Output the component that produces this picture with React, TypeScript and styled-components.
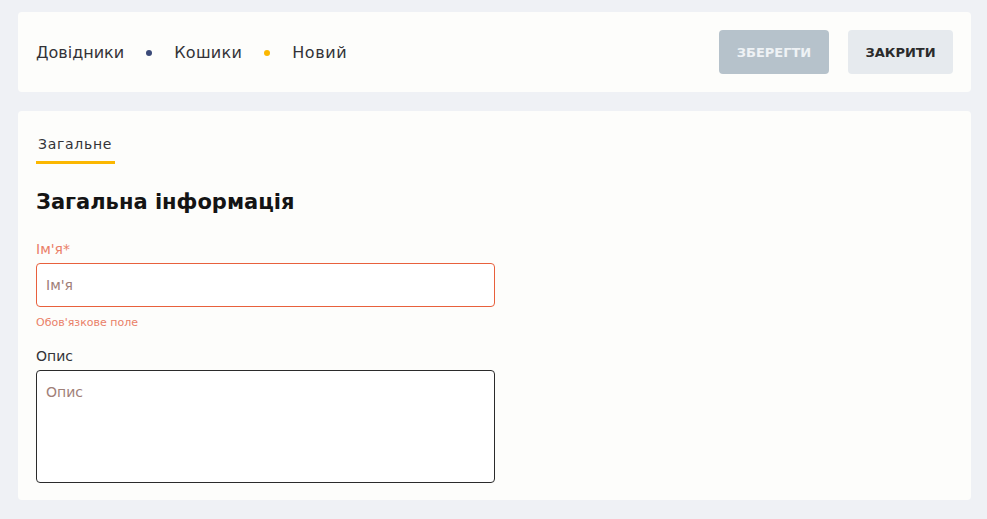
import React from "react";
import styled, { createGlobalStyle } from "styled-components";

const Global = createGlobalStyle`
  html, body { margin: 0; padding: 0; background: #eff1f5; }
  body { font-family: "DejaVu Sans", "Noto Sans", sans-serif; color: #2b2b2b; }
  * { box-sizing: border-box; }
`;

const Page = styled.div`
  display: flex;
  flex-direction: column;
  gap: 19px;
  padding: 12px 16px 18px 18px;
  width: 987px;
`;

const Card = styled.div`
  background: #fdfdfb;
  border-radius: 4px;
`;

const Header = styled(Card)`
  height: 80px;
  display: flex;
  align-items: center;
  justify-content: space-between;
  padding: 0 18px;
`;

const Crumbs = styled.nav`
  display: flex;
  align-items: center;
  font-size: 16px;
  color: #333338;
`;

const Crumb = styled.span<{ $spacing?: number }>`
  letter-spacing: ${(p) => p.$spacing ?? 0}px;
`;

const Dot = styled.span<{ $color: string }>`
  width: 6px;
  height: 6px;
  border-radius: 50%;
  background: ${(p) => p.$color};
  margin: 2px 22px 0 22px;
`;

const Actions = styled.div`
  display: flex;
  gap: 19px;
`;

const Button = styled.button<{ $variant: "primary" | "secondary" }>`
  height: 44px;
  border: none;
  border-radius: 4px;
  font-family: inherit;
  font-weight: 700;
  font-size: 13px;
  padding: 0;
  background: ${(p) => (p.$variant === "primary" ? "#b6c2cb" : "#e6eaee")};
  color: ${(p) => (p.$variant === "primary" ? "#eef2f5" : "#2b2b2b")};
  width: ${(p) => (p.$variant === "primary" ? "110px" : "105px")};
`;

const Main = styled(Card)`
  height: 389px;
  padding: 18px 18px;
`;

const Tabs = styled.div`
  display: flex;
`;

const Tab = styled.div`
  font-size: 14px;
  letter-spacing: 0.7px;
  color: #333338;
  padding: 7px 2px 9px 2px;
  width: 79px;
  border-bottom: 3px solid #fbb700;
`;

const Title = styled.h2`
  margin: 24px 0 0 0;
  font-size: 21px;
  font-weight: 700;
  color: #141414;
  line-height: 28px;
`;

const Field = styled.div<{ $gap: number }>`
  width: 459px;
  display: flex;
  flex-direction: column;
  margin-top: ${(p) => p.$gap}px;
`;

const Label = styled.label<{ $error?: boolean }>`
  font-size: 14px;
  line-height: 20px;
  color: ${(p) => (p.$error ? "#ea8068" : "#333338")};
  margin-bottom: 4px;
`;

const Input = styled.input<{ $error?: boolean }>`
  height: 44px;
  border: 1px solid ${(p) => (p.$error ? "#e8603c" : "#2b2b2b")};
  border-radius: 4px;
  background: #fff;
  padding: 0 9px;
  font-family: inherit;
  font-size: 14px;
  outline: none;
  &::placeholder { color: #a08078; }
`;

const TextArea = styled.textarea`
  height: 113px;
  border: 1px solid #2b2b2b;
  border-radius: 4px;
  background: #fff;
  padding: 13px 9px;
  font-family: inherit;
  font-size: 14px;
  resize: none;
  outline: none;
  &::placeholder { color: #a08078; }
`;

const ErrorText = styled.div`
  font-size: 11px;
  color: #ea8068;
  margin-top: 9px;
  line-height: 14px;
`;

export default function App() {
  return (
    <>
      <Global />
      <Page>
        <Header>
          <Crumbs>
            <Crumb>Довідники</Crumb>
            <Dot $color="#3b4a78" />
            <Crumb $spacing={0.3}>Кошики</Crumb>
            <Dot $color="#fbb700" />
            <Crumb $spacing={0.6}>Новий</Crumb>
          </Crumbs>
          <Actions>
            <Button $variant="primary">ЗБЕРЕГТИ</Button>
            <Button $variant="secondary">ЗАКРИТИ</Button>
          </Actions>
        </Header>
        <Main>
          <Tabs>
            <Tab>Загальне</Tab>
          </Tabs>
          <Title>Загальна інформація</Title>
          <Field $gap={23}>
            <Label $error>Ім'я*</Label>
            <Input $error placeholder="Ім'я" />
            <ErrorText>Обов'язкове поле</ErrorText>
          </Field>
          <Field $gap={16}>
            <Label>Опис</Label>
            <TextArea placeholder="Опис" />
          </Field>
        </Main>
      </Page>
    </>
  );
}
